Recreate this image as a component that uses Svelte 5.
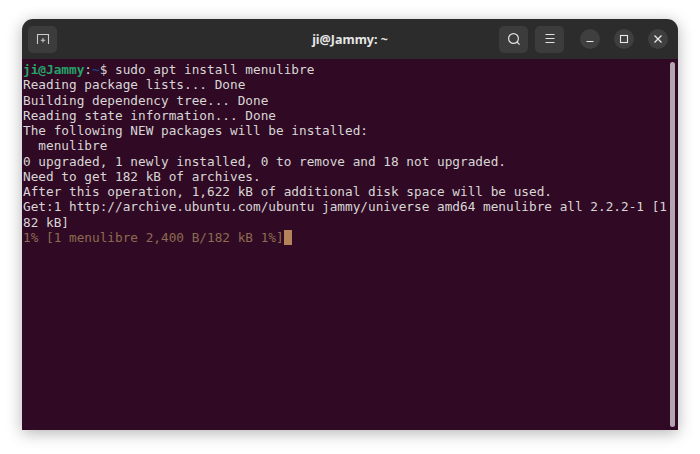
<script>
	const lines = [
		"Reading package lists... Done",
		"Building dependency tree... Done",
		"Reading state information... Done",
		"The following NEW packages will be installed:",
		"  menulibre",
		"0 upgraded, 1 newly installed, 0 to remove and 18 not upgraded.",
		"Need to get 182 kB of archives.",
		"After this operation, 1,622 kB of additional disk space will be used.",
		"Get:1 http://archive.ubuntu.com/ubuntu jammy/universe amd64 menulibre all 2.2.2-1 [1",
		"82 kB]",
	];
</script>

<div class="page">
	<div class="window">
		<header class="titlebar">
			<button class="tool" aria-label="New tab">
				<svg width="16" height="16" viewBox="0 0 16 16" fill="none" stroke="#ccc" stroke-width="1.1">
					<path d="M2.5 13V3.5h11V13" />
					<path d="M8 7v4.5M5.8 9.2h4.4" />
				</svg>
			</button>
			<div class="title">ji@Jammy: ~</div>
			<div class="actions">
				<button class="tool" aria-label="Search">
					<svg width="16" height="16" viewBox="0 0 16 16" fill="none" stroke="#e0e0e0" stroke-width="1.2">
						<circle cx="7.5" cy="7.5" r="4.9" />
						<path d="M11 11l2.6 2.6" />
					</svg>
				</button>
				<button class="tool" aria-label="Menu">
					<svg width="16" height="16" viewBox="0 0 16 16" fill="none" stroke="#e0e0e0" stroke-width="1.1">
						<path d="M3.5 3.5h9M3.5 7.5h9M3.5 11.5h9" />
					</svg>
				</button>
			</div>
			<div class="controls">
				<button class="round" aria-label="Minimize">
					<svg width="12" height="12" viewBox="0 0 12 12" fill="none" stroke="#e8e8e8" stroke-width="1.1">
						<path d="M2.5 8.5h7" />
					</svg>
				</button>
				<button class="round" aria-label="Maximize">
					<svg width="12" height="12" viewBox="0 0 12 12" fill="none" stroke="#e8e8e8" stroke-width="1.1">
						<rect x="2.5" y="2.5" width="7" height="7" />
					</svg>
				</button>
				<button class="round" aria-label="Close">
					<svg width="12" height="12" viewBox="0 0 12 12" fill="none" stroke="#e8e8e8" stroke-width="1.3">
						<path d="M2.5 2.5l7 7M9.5 2.5l-7 7" />
					</svg>
				</button>
			</div>
		</header>
		<div class="terminal">
			<div class="output">
				<div class="line"><span class="user">ji@Jammy</span>:<span class="path">~</span>$ sudo apt install menulibre</div>
				{#each lines as line}
					<div class="line">{line}</div>
				{/each}
				<div class="line progress">1% [1 menulibre 2,400 B/182 kB 1%]<span class="cursor"></span></div>
			</div>
			<div class="scrollbar"></div>
		</div>
	</div>
</div>

<style>
	:global(body) {
		margin: 0;
		background: #fff;
	}

	.page {
		width: 700px;
		height: 454px;
		box-sizing: border-box;
		padding: 19px 22px 24px;
		overflow: hidden;
	}

	.window {
		height: 411px;
		display: flex;
		flex-direction: column;
		border-radius: 11px 11px 0 0;
		overflow: hidden;
		box-shadow: 0 3px 16px rgba(0, 0, 0, 0.3);
	}

	.titlebar {
		height: 40px;
		flex: none;
		display: flex;
		align-items: center;
		background: #2c2c2c;
		padding: 0 10px 0 6px;
		position: relative;
	}

	.title {
		position: absolute;
		left: 0;
		right: 0;
		text-align: center;
		color: #e6e6e6;
		font: bold 12.5px "Noto Sans", "Open Sans", sans-serif;
		pointer-events: none;
	}

	.tool {
		width: 29px;
		height: 27px;
		padding: 0;
		border: none;
		border-radius: 5px;
		background: #3c3c3c;
		display: flex;
		align-items: center;
		justify-content: center;
	}

	.actions {
		margin-left: auto;
		display: flex;
		gap: 7px;
		position: relative;
	}

	.controls {
		display: flex;
		gap: 14px;
		margin-left: 16px;
		position: relative;
	}

	.round {
		width: 20px;
		height: 20px;
		padding: 0;
		border: none;
		border-radius: 50%;
		background: #3f3f3f;
		display: flex;
		align-items: center;
		justify-content: center;
	}

	.terminal {
		flex: 1;
		display: flex;
		background: #300a24;
		min-height: 0;
	}

	.output {
		flex: 1;
		padding: 3px 0 0 1px;
		font-family: "DejaVu Sans Mono", "Liberation Mono", monospace;
		font-size: 12.74px;
		line-height: 15.27px;
		color: #d8d6d6;
		min-width: 0;
	}

	.line {
		height: 15.27px;
		white-space: pre;
	}

	.user {
		color: #26a269;
		font-weight: bold;
	}

	.path {
		color: #12488b;
		font-weight: bold;
	}

	.progress {
		color: #8d6a50;
		display: flex;
	}

	.cursor {
		width: 8px;
		height: 15px;
		background: #b5835a;
	}

	.scrollbar {
		width: 5px;
		flex: none;
		margin: 3px 3px 3px 0;
		background: #b3a4af;
		border-radius: 3px;
	}
</style>
